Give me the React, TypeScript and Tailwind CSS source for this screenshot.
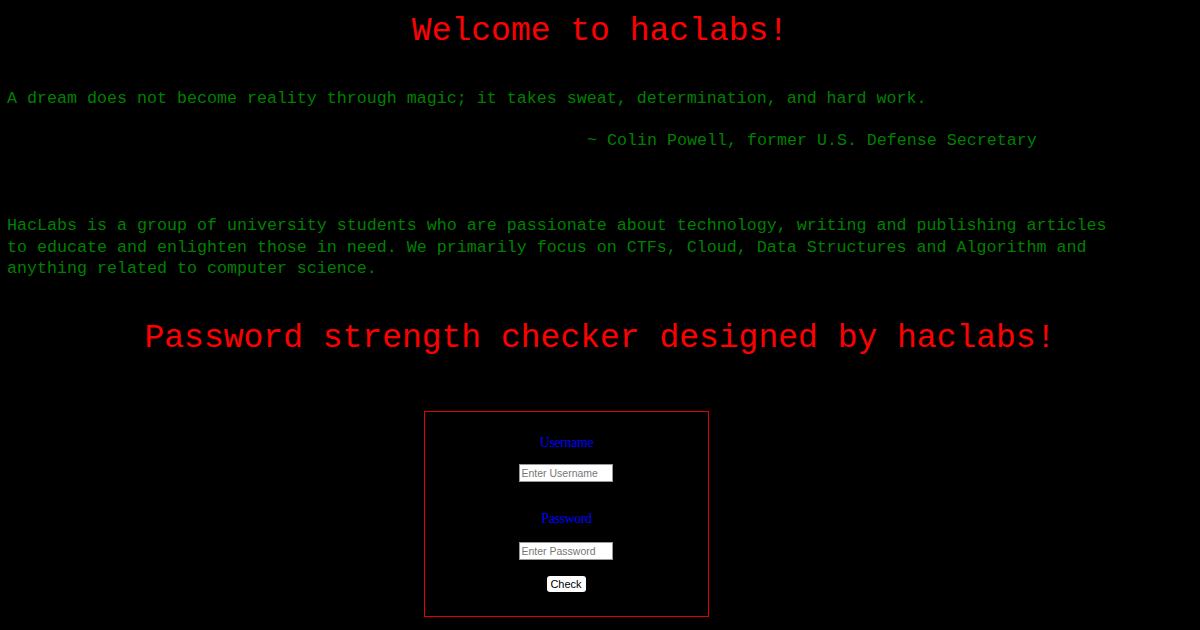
export default function App() {
  const mono = { fontFamily: '"Liberation Mono", "Courier New", monospace' };
  const serif = { fontFamily: '"Liberation Serif", "Times New Roman", serif' };
  const sans = { fontFamily: '"Liberation Sans", Arial, sans-serif' };
  return (
    <div className="min-h-[630px] w-[1200px] bg-black overflow-hidden" style={mono}>
      <h1 className="pt-[13px] text-center text-[33px] leading-[38px] text-[#ff0000] font-normal">
        Welcome to haclabs!
      </h1>
      <p className="mt-[37px] px-[7px] text-[16.67px] leading-[21.5px] text-[#008000]">
        A dream does not become reality through magic; it takes sweat, determination, and hard work.
      </p>
      <p className="mt-[20.5px] pl-[587px] text-[16.67px] leading-[21.5px] text-[#008000]">
        ~ Colin Powell, former U.S. Defense Secretary
      </p>
      <p className="mt-[63.5px] px-[7px] w-[1130px] text-[16.67px] leading-[21.5px] text-[#008000]">
        HacLabs is a group of university students who are passionate about technology, writing and publishing articles to educate and enlighten those in need. We primarily focus on CTFs, Cloud, Data Structures and Algorithm and anything related to computer science.
      </p>
      <h2 className="mt-[40.5px] text-center text-[33px] leading-[38px] text-[#ff0000] font-normal">
        Password strength checker designed by haclabs!
      </h2>
      <div className="mt-[53px] ml-[424px] w-[285px] h-[206px] border border-[#e00000] flex flex-col items-center">
        <div className="mt-[23px] text-[14px] leading-[16px] tracking-[-0.4px] text-[#0000ff]" style={serif}>
          Username
        </div>
        <input
          className="mt-[13px] mr-[2px] w-[94px] h-[18px] bg-white border border-[#999] px-[2px] text-[10.5px] text-black placeholder:text-[#777] outline-none"
          style={sans}
          placeholder="Enter Username"
        />
        <div className="mt-[29px] text-[14px] leading-[16px] tracking-[-0.4px] text-[#0000ff]" style={serif}>
          Password
        </div>
        <input
          type="password"
          className="mt-[15px] mr-[2px] w-[94px] h-[18px] bg-white border border-[#999] px-[2px] text-[10.5px] text-black placeholder:text-[#777] outline-none"
          style={sans}
          placeholder="Enter Password"
        />
        <button
          className="mt-[16px] mr-[1px] w-[39px] h-[16px] bg-white rounded-[3px] text-[11px] leading-[16px] text-black"
          style={sans}
        >
          Check
        </button>
      </div>
    </div>
  );
}
